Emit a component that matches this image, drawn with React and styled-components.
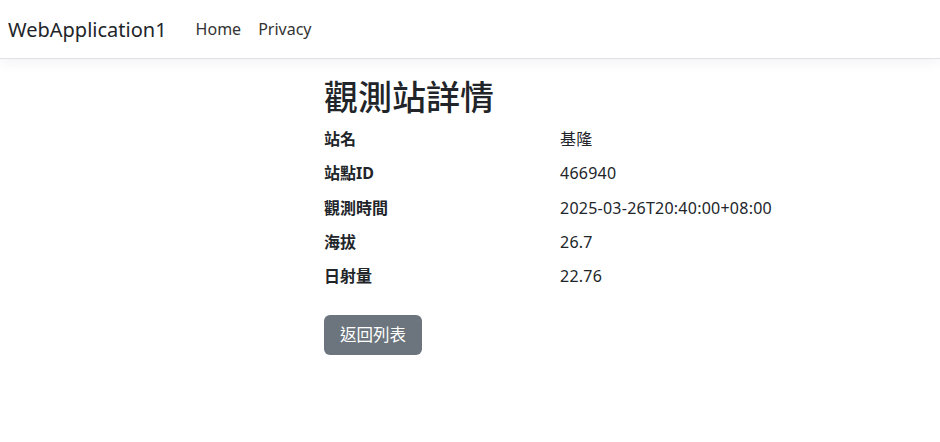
import styled, { createGlobalStyle } from "styled-components";

const GlobalStyle = createGlobalStyle`
    html, body {
        margin: 0;
        padding: 0;
        background: #fff;
    }
    body {
        font-family: "Noto Sans", "Noto Sans CJK TC", sans-serif;
        font-size: 16px;
        color: #212529;
    }
`;

const Navbar = styled.nav`
    height: 58px;
    display: flex;
    align-items: center;
    padding: 0 8px;
    border-bottom: 1px solid #dee2e6;
    box-shadow: 0 4px 12px rgba(0, 0, 0, 0.05);
    background: #fff;
`;

const Brand = styled.a`
    font-size: 20px;
    color: #212529;
    text-decoration: none;
    margin-right: 29px;
`;

const NavLinks = styled.div`
    display: flex;
    gap: 17px;
`;

const NavLink = styled.a`
    font-size: 16px;
    color: #333;
    text-decoration: none;
`;

const Main = styled.main`
    padding: 18px 0 0 324px;
`;

const Title = styled.h1`
    margin: 0 0 8px;
    font-size: 34px;
    font-weight: 500;
    line-height: 41px;
`;

const Details = styled.dl`
    display: grid;
    grid-template-columns: 236px auto;
    margin: 0 0 18px;
`;

const Term = styled.dt`
    font-weight: 700;
    line-height: 26px;
    margin-bottom: 8.3px;
`;

const Value = styled.dd`
    margin: 0 0 8.3px;
    line-height: 26px;
    letter-spacing: 0.24px;
`;

const Button = styled.a`
    display: inline-block;
    padding: 7px 16px;
    line-height: 26px;
    font-size: 16.5px;
    color: #fff;
    background: #6c757d;
    border-radius: 6px;
    text-decoration: none;
`;

const rows = [
    ["站名", "基隆"],
    ["站點ID", "466940"],
    ["觀測時間", "2025-03-26T20:40:00+08:00"],
    ["海拔", "26.7"],
    ["日射量", "22.76"],
];

export default function App() {
    return (
        <>
            <GlobalStyle />
            <Navbar>
                <Brand href="#">WebApplication1</Brand>
                <NavLinks>
                    <NavLink href="#">Home</NavLink>
                    <NavLink href="#">Privacy</NavLink>
                </NavLinks>
            </Navbar>
            <Main>
                <Title>觀測站詳情</Title>
                <Details>
                    {rows.map(([label, value]) => (
                        <>
                            <Term key={label}>{label}</Term>
                            <Value key={label + "v"}>{value}</Value>
                        </>
                    ))}
                </Details>
                <Button href="#">返回列表</Button>
            </Main>
        </>
    );
}
